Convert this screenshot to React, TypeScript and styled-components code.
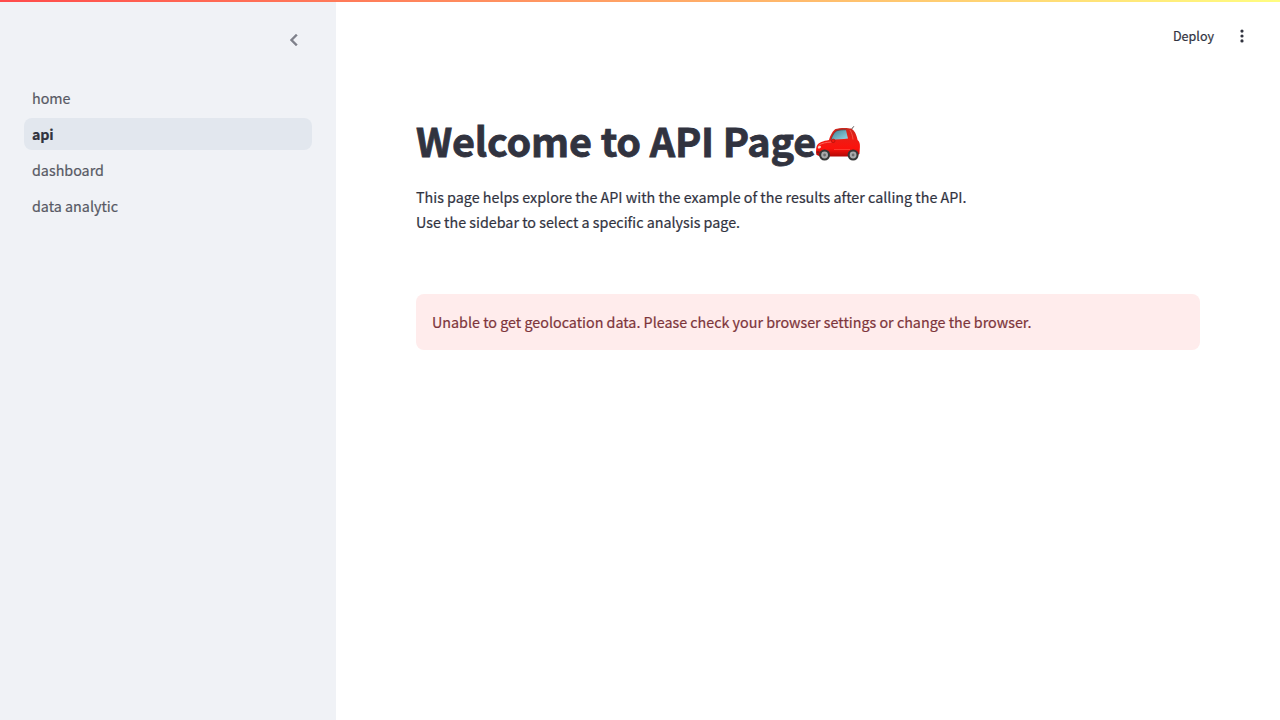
import React from "react";
import styled, { createGlobalStyle } from "styled-components";

const GlobalStyle = createGlobalStyle`
  * { box-sizing: border-box; }
  body {
    margin: 0;
    background: #fff;
    color: #31333f;
    font-family: "Noto Sans CJK SC", "Noto Sans", sans-serif;
    font-size: 14.32px;
    line-height: 25px;
    overflow: hidden;
    -webkit-text-stroke: 0.2px currentColor;
  }
`;

const AppShell = styled.div`
  display: flex;
  height: 100vh;
  position: relative;
`;

const Decoration = styled.div`
  position: absolute;
  inset: 0 0 auto 0;
  height: 2px;
  background: linear-gradient(90deg, #ff4b4b, #fffd80);
`;

const Sidebar = styled.aside`
  width: 336px;
  flex: none;
  background: #f0f2f6;
`;

const SidebarHeader = styled.div`
  height: 82px;
  padding: 28px 30px 0 0;
  display: flex;
  justify-content: flex-end;
  align-items: flex-start;
`;

const CollapseButton = styled.button`
  border: 0;
  padding: 0;
  background: none;
  color: #7f818b;
  display: flex;
`;

const NavList = styled.nav`
  display: flex;
  flex-direction: column;
  gap: 4px;
  padding: 0 24px;
`;

const NavLink = styled.a<{ $active?: boolean }>`
  height: 32px;
  line-height: 32px;
  padding: 0 8px;
  border-radius: 8px;
  color: ${(p) => (p.$active ? "#31333f" : "#575964")};
  font-weight: ${(p) => (p.$active ? 700 : 400)};
  letter-spacing: ${(p) => (p.$active ? "-0.2px" : "normal")};
  background: ${(p) => (p.$active ? "#e2e7ee" : "transparent")};
`;

const Main = styled.main`
  flex: 1;
  display: flex;
  flex-direction: column;
`;

const Toolbar = styled.header`
  height: 72px;
  padding-right: 28px;
  display: flex;
  align-items: center;
  justify-content: flex-end;
  gap: 18px;
`;

const DeployButton = styled.button`
  border: 0;
  padding: 0;
  background: none;
  color: inherit;
  font: 400 12.55px/20px "Noto Sans CJK SC", "Noto Sans", sans-serif;
  -webkit-text-stroke: 0.2px currentColor;
`;

const MenuIcon = styled.svg`
  width: 20px;
  height: 20px;
  display: block;
`;

const Content = styled.section`
  padding: 41px 80px 0;
`;

const Title = styled.h1`
  margin: 0 0 18px;
  display: flex;
  font-size: 39.6px;
  line-height: 53px;
  letter-spacing: -0.2px;
  font-weight: 700;
  -webkit-text-stroke: 0.8px currentColor;
`;

const CarIcon = styled.svg`
  width: 44px;
  height: 36px;
  margin-top: 12px;
  flex: none;
`;

const Paragraph = styled.p`
  margin: 0 0 60px;
`;

const Alert = styled.div`
  height: 56px;
  padding: 15.4px 16px;
  border-radius: 8px;
  background: #ffecec;
  color: #7d353b;
`;

const pages = ["home", "api", "dashboard", "data analytic"];

function Car() {
  return (
    <CarIcon viewBox="0 0 44 36" role="img" aria-label="car">
      <defs>
        <linearGradient id="paint" x1="0" y1="0" x2="0" y2="1">
          <stop offset="0" stopColor="#c9281e" />
          <stop offset=".4" stopColor="#ee1c14" />
          <stop offset=".72" stopColor="#fb120c" />
          <stop offset="1" stopColor="#b30806" />
        </linearGradient>
        <linearGradient id="glass" x1="0" y1="0" x2="1" y2="1">
          <stop offset="0" stopColor="#3b8195" />
          <stop offset="1" stopColor="#9bd5e4" />
        </linearGradient>
      </defs>
      <path d="M35.7 4L37.6 1.6" stroke="#555" strokeWidth="1" strokeLinecap="round" />
      <path
        d="M1 20.5C2.5 17.5 7 16 13 15C14.5 10 17 5.7 19.5 4.1C22.5 2.7 32 2.5 35 3.6C38.5 5 40.5 10 41.6 15C43.8 16.8 44 19 43.9 22.5L43.4 29L39 31.5H4L.4 29.8C-.2 26 .1 22.5 1 20.5Z"
        fill="url(#paint)"
      />
      <path d="M15 14.8C16.4 10 18.8 6.6 21 5.7C23.5 4.9 27 4.7 29.9 4.8L32 13.5C27 14 20 14.7 15 14.8Z" fill="url(#glass)" />
      <path d="M15 14.8C16.4 10 18.8 6.6 21 5.7C23.5 4.9 27 4.7 29.9 4.8" fill="none" stroke="#64302f" strokeWidth=".7" />
      <path d="M2.5 20.5C5.5 18 10.5 17.3 15.5 17" stroke="#ff6a5e" strokeWidth=".9" fill="none" />
      <path d="M34 5C35.8 8 36.6 11 37 14.5" stroke="#ff5c50" strokeWidth=".8" fill="none" />
      <path d="M18 24.5H34" stroke="#ff4a3e" strokeWidth=".7" />
      <ellipse cx="17.2" cy="15.8" rx="1.8" ry="1.8" fill="#f3190f" stroke="#9e120c" strokeWidth=".6" />
      <ellipse cx="3.4" cy="22.2" rx="1.7" ry="1.2" transform="rotate(-25 3.4 22.2)" fill="#ffd0be" />
      <path d="M.5 26.2H3.3V28.2H.6Z" fill="#8c1612" />
      <circle cx="8.6" cy="30" r="5.5" fill="#373737" />
      <circle cx="8.6" cy="30" r="3.4" fill="#a9aaab" />
      <circle cx="8.6" cy="30" r="1.4" fill="#6b6c6d" />
      <circle cx="37.1" cy="30" r="5.5" fill="#373737" />
      <circle cx="37.1" cy="30" r="3.4" fill="#a9aaab" />
      <circle cx="37.1" cy="30" r="1.4" fill="#6b6c6d" />
    </CarIcon>
  );
}

export default function App() {
  return (
    <AppShell>
      <GlobalStyle />
      <Sidebar>
        <SidebarHeader>
          <CollapseButton aria-label="Collapse sidebar">
            <svg width="24" height="24" viewBox="0 0 24 24" fill="currentColor" stroke="currentColor" strokeWidth=".4">
              <path d="M15.41 7.41L14 6l-6 6 6 6 1.41-1.41L10.83 12z" />
            </svg>
          </CollapseButton>
        </SidebarHeader>
        <NavList>
          {pages.map((page) => (
            <NavLink key={page} $active={page === "api"}>
              {page}
            </NavLink>
          ))}
        </NavList>
      </Sidebar>
      <Main>
        <Toolbar>
          <DeployButton>Deploy</DeployButton>
          <MenuIcon viewBox="0 0 20 20" fill="#31333f">
            <circle cx="10" cy="5.1" r="1.6" />
            <circle cx="10" cy="10" r="1.6" />
            <circle cx="10" cy="14.9" r="1.6" />
          </MenuIcon>
        </Toolbar>
        <Content>
          <Title>
            Welcome to API Page
            <Car />
          </Title>
          <Paragraph>
            This page helps explore the API with the example of the results after calling the API.
            <br />
            Use the sidebar to select a specific analysis page.
          </Paragraph>
          <Alert>Unable to get geolocation data. Please check your browser settings or change the browser.</Alert>
        </Content>
      </Main>
      <Decoration />
    </AppShell>
  );
}
